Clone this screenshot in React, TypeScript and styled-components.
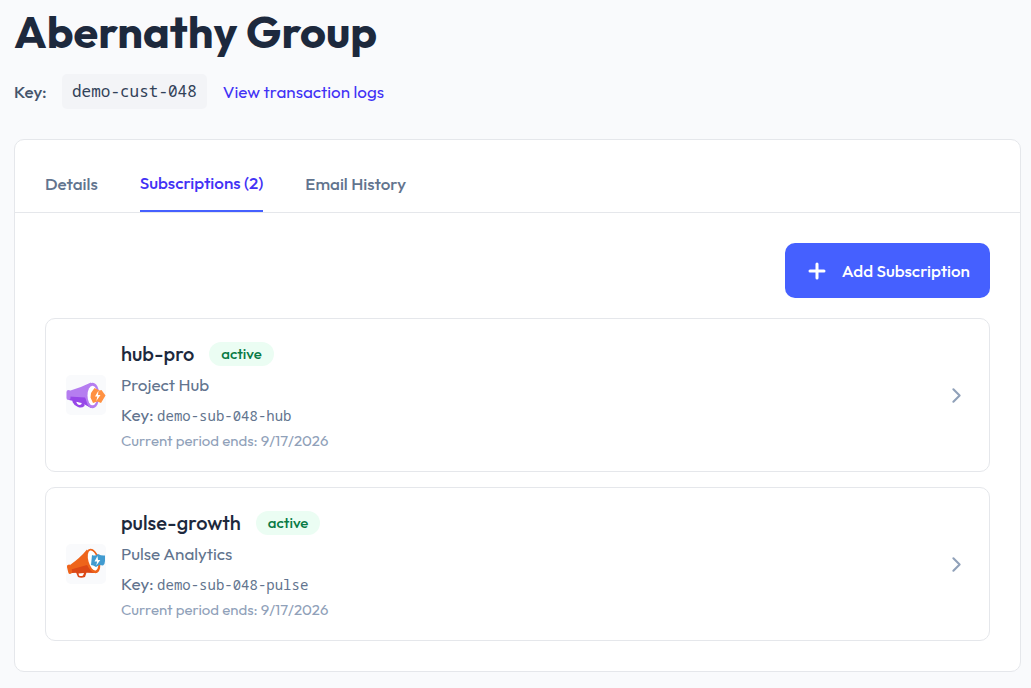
import React from "react";
import styled, { createGlobalStyle } from "styled-components";
import { ChevronRight, Plus } from "lucide-react";

const GlobalStyle = createGlobalStyle`
  *, *::before, *::after { box-sizing: border-box; }
  body {
    margin: 0;
    background: #f9fafc;
    color: #1d293d;
    font-family: Outfit, Lato, sans-serif;
    font-size: 17px;
    font-weight: 400;
    line-height: 24px;
  }
  h1, h2, p, ul { margin: 0; padding: 0; }
  button { font: inherit; border: 0; cursor: pointer; }
`;

const mono = `"Noto Sans Mono", "DejaVu Sans Mono", monospace`;

const Page = styled.main`
  padding: 4px 10px 15px 14px;
`;

const Title = styled.h1`
  font-size: 45px;
  line-height: 56px;
  font-weight: 700;
`;

const Meta = styled.div`
  display: flex;
  align-items: center;
  margin: 14px 0 30px;
`;

const MetaLabel = styled.span`
  width: 48px;
  color: #45556c;
  font-weight: 500;
`;

const KeyChip = styled.code`
  padding: 5px 10px;
  border-radius: 5px;
  background: #f3f4f7;
  color: #314158;
  font: 16px/25px ${mono};
`;

const LogsLink = styled.a`
  margin-left: 16px;
  color: #4232f5;
  text-decoration: none;
`;

const Card = styled.section`
  border: 1px solid #e5e7eb;
  border-radius: 10px;
  background: #fff;
`;

const TabBar = styled.div`
  display: flex;
  gap: 42px;
  padding: 15px 30px 0;
  border-bottom: 1px solid #e5e7eb;
`;

const Tab = styled.button<{ $active?: boolean }>`
  height: 57px;
  padding: 0;
  background: none;
  border-bottom: ${(p) => (p.$active ? "2px solid #4560ff" : "0")};
  color: ${(p) => (p.$active ? "#4232f5" : "#62748e")};
  font-weight: 500;
`;

const Panel = styled.div`
  padding: 30px;
`;

const Actions = styled.div`
  display: flex;
  justify-content: flex-end;
  margin-bottom: 20px;
`;

const AddButton = styled.button`
  display: flex;
  align-items: center;
  gap: 13px;
  height: 55px;
  padding: 0 20px;
  border-radius: 10px;
  background: #4560ff;
  color: #fff;
  font-weight: 500;
`;

const List = styled.ul`
  display: grid;
  gap: 15px;
  list-style: none;
`;

const Row = styled.li`
  display: flex;
  align-items: center;
  gap: 15px;
  padding: 20px;
  border: 1px solid #e5e7eb;
  border-radius: 10px;
`;

const Logo = styled.svg`
  flex: none;
  width: 40px;
  height: 40px;
  border-radius: 5px;
  background: #f9fafc;
`;

const Info = styled.div`
  flex: 1;
`;

const Heading = styled.div`
  display: flex;
  align-items: center;
  gap: 15px;
  height: 30px;
  margin-bottom: 1px;
`;

const Name = styled.h2`
  font-size: 20px;
  font-weight: 500;
`;

const Badge = styled.span`
  padding: 0 12px;
  border-radius: 12px;
  background: #ebfdf3;
  color: #087a45;
  font-size: 15px;
  font-weight: 500;
`;

const Line = styled.p`
  line-height: 30px;
  color: #62748e;
`;

const SubKey = styled.code`
  font: 14px/20px ${mono};
`;

const Period = styled.p`
  color: #90a1b9;
  font-size: 15px;
  line-height: 21px;
`;

const OpenButton = styled.button`
  display: flex;
  padding: 0;
  background: none;
  color: #90a1b9;
`;

const HubLogo = () => (
  <Logo viewBox="0 0 40 40" role="img" aria-label="Project Hub">
    <path d="M6.500 24h12v7q-3 2.500-6.500 1-4-1.500-5.500-5z" fill="#9747e8" />
    <path d="M10 26.500q3 1 6 1-.5 2.500-2.500 2.500t-3.500-3.500z" fill="#fff" />
    <path d="M3 16Q14 13 25 7.500V33L16 27 3 24z" fill="#b57df0" />
    <path d="M3 21.500L19 22.500 25 33 16 28 3 25z" fill="#9747e8" />
    <rect x=".5" y="15" width="4" height="10" rx="2" fill="#b57df0" />
    <ellipse cx="26.500" cy="20.500" rx="7" ry="12.800" fill="#b57df0" />
    <ellipse cx="26.500" cy="20.500" rx="5" ry="9.800" fill="#fff" />
    <path d="M25 18l3.500-5 5 2.500 2-.5 4 5.500-4.500 7.500-3.500-1.500-4.500 1.500-2.500-5.500z" fill="#ff9142" />
    <path d="M32.500 15.500l-3.500 6h2.300l-1 4.500 4.200-6H32z" fill="#fff" />
  </Logo>
);

const PulseLogo = () => (
  <Logo viewBox="0 0 40 40" role="img" aria-label="Pulse Analytics">
    <path d="M9 26l12 1-2 6q-4 1.500-7 0z" fill="#dc4816" />
    <path d="M12.500 29.500l5.500-.5-1 2.500q-2 1-4 0z" fill="#fff" />
    <path d="M4 21Q14 14 21 5.500L31 29 17 28 5 28z" fill="#ee641b" />
    <path d="M5 25.500L21 21 31 29 17 28.500 6 29z" fill="#dc4816" />
    <rect x="1.500" y="20.500" width="4" height="9.500" rx="2" transform="rotate(-14 3.500 25)" fill="#ee641b" />
    <ellipse cx="27" cy="17" rx="6.800" ry="12.500" transform="rotate(-16 27 17)" fill="#ee641b" />
    <ellipse cx="27" cy="16.500" rx="4.600" ry="10.300" transform="rotate(-16 27 16.500)" fill="#fff" />
    <path d="M26 11q3.500 1.500 6-1 3.500 2 7 1.500V17q0 3-2 4.500l-3.500-.5-3.500 2q-3-2-5-2z" fill="#419bd0" />
    <path d="M31.500 12l-3 5.500h2.600l-.8 4 4-5.500H32z" fill="#fff" />
  </Logo>
);

const subscriptions = [
  { name: "hub-pro", product: "Project Hub", key: "demo-sub-048-hub", logo: <HubLogo /> },
  { name: "pulse-growth", product: "Pulse Analytics", key: "demo-sub-048-pulse", logo: <PulseLogo /> },
];

export default function App() {
  return (
    <>
      <GlobalStyle />
      <Page>
        <Title>Abernathy Group</Title>
        <Meta>
          <MetaLabel>Key:</MetaLabel>
          <KeyChip>demo-cust-048</KeyChip>
          <LogsLink href="#logs">View transaction logs</LogsLink>
        </Meta>
        <Card>
          <TabBar role="tablist">
            <Tab role="tab" aria-selected={false}>Details</Tab>
            <Tab role="tab" aria-selected $active>Subscriptions (2)</Tab>
            <Tab role="tab" aria-selected={false}>Email History</Tab>
          </TabBar>
          <Panel role="tabpanel">
            <Actions>
              <AddButton>
                <Plus size={24} strokeWidth={3} aria-hidden />
                Add Subscription
              </AddButton>
            </Actions>
            <List>
              {subscriptions.map((s) => (
                <Row key={s.key}>
                  {s.logo}
                  <Info>
                    <Heading>
                      <Name>{s.name}</Name>
                      <Badge>active</Badge>
                    </Heading>
                    <Line>{s.product}</Line>
                    <Line>
                      Key: <SubKey>{s.key}</SubKey>
                    </Line>
                    <Period>Current period ends: 9/17/2026</Period>
                  </Info>
                  <OpenButton aria-label={`Open ${s.name}`}>
                    <ChevronRight size={25} strokeWidth={2} />
                  </OpenButton>
                </Row>
              ))}
            </List>
          </Panel>
        </Card>
      </Page>
    </>
  );
}
